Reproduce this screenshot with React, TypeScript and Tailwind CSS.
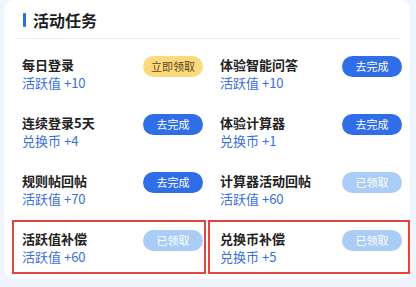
import React from "react";

type Btn = "claim" | "go" | "done";
type Item = { title: string; sub: string; btn: Btn; red?: boolean };

const items: Item[] = [
  { title: "每日登录", sub: "活跃值 +10", btn: "claim" },
  { title: "体验智能问答", sub: "活跃值 +10", btn: "go" },
  { title: "连续登录5天", sub: "兑换币 +4", btn: "go" },
  { title: "体验计算器", sub: "兑换币 +1", btn: "go" },
  { title: "规则帖回帖", sub: "活跃值 +70", btn: "go" },
  { title: "计算器活动回帖", sub: "活跃值 +60", btn: "done" },
  { title: "活跃值补偿", sub: "活跃值 +60", btn: "done", red: true },
  { title: "兑换币补偿", sub: "兑换币 +5", btn: "done", red: true },
];

function Button({ kind }: { kind: Btn }) {
  if (kind === "claim")
    return (
      <div className="w-[60px] h-[21px] rounded-full bg-[#fcd97c] text-[#5a4720] text-[11px] leading-[21px] text-center">
        立即领取
      </div>
    );
  if (kind === "go")
    return (
      <div className="w-[60px] h-[21px] rounded-full bg-[#2f6ee6] text-white text-[11px] leading-[21px] text-center">
        去完成
      </div>
    );
  return (
    <div className="w-[60px] h-[21px] rounded-full bg-[#aacdf7] text-white text-[11px] leading-[21px] text-center">
      已领取
    </div>
  );
}

export default function App() {
  return (
    <div
      className="w-[416px] h-[287px] bg-[#eef5fe] pl-[4px] overflow-hidden"
      style={{ fontFamily: '"Noto Sans CJK SC", "Noto Sans", sans-serif' }}
    >
      <div className="w-[406px] h-[279px] bg-white rounded-[10px]">
        <div className="h-[38px] flex items-center pl-[19px] pt-[2px]">
          <div className="w-[3px] h-[14px] bg-[#2f6ee6] rounded-[1px]" />
          <div className="ml-[7px] text-[16px] font-bold text-[#1f1f1f] leading-[20px]">活动任务</div>
        </div>
        <div className="ml-[11px] mr-[10px] h-px bg-[#efefef]" />
        <div className="mt-[7px] pl-[8px] grid grid-cols-[194px_202px] gap-x-[2px] gap-y-[4px]">
          {items.map((it, i) => (
            <div
              key={i}
              className={`h-[54px] border-2 flex items-start justify-between pt-[8px] ${
                it.red ? "border-[#e4443d]" : "border-transparent"
              } ${i % 2 === 0 ? "pl-[8px] pr-[1px]" : "pl-[10px] pr-[6px]"}`}
            >
              <div>
                <div className="text-[13px] font-bold text-[#222222] leading-[18px]">{it.title}</div>
                <div className="text-[13px] text-[#3a6fdc] leading-[18px]">{it.sub}</div>
              </div>
              <Button kind={it.btn} />
            </div>
          ))}
        </div>
      </div>
    </div>
  );
}
